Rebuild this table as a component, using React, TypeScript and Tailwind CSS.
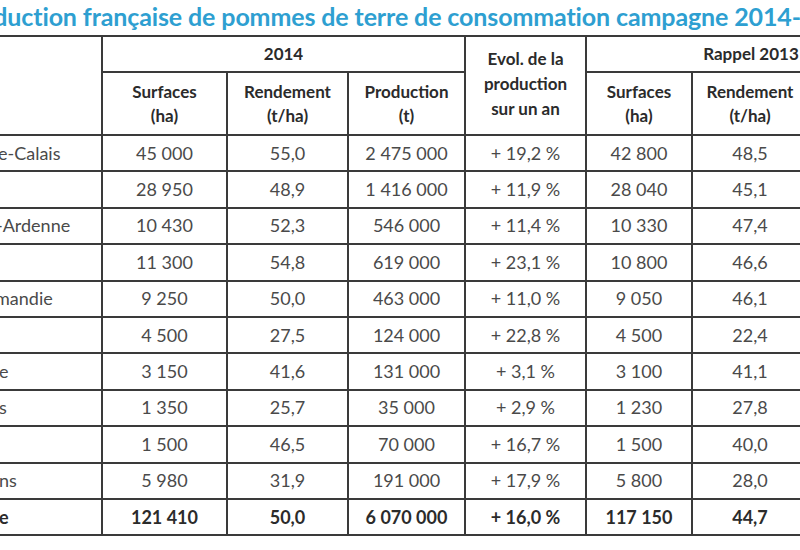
import React from "react";

const rows: { label: string; cells: string[]; bold?: boolean; pad?: string }[] = [
  { label: "e-Calais", cells: ["45 000", "55,0", "2 475 000", "+ 19,2 %", "42 800", "48,5"], pad: "-ml-[2px]" },
  { label: "", cells: ["28 950", "48,9", "1 416 000", "+ 11,9 %", "28 040", "45,1"] },
  { label: "-Ardenne", cells: ["10 430", "52,3", "546 000", "+ 11,4 %", "10 330", "47,4"], pad: "-ml-[4px]" },
  { label: "", cells: ["11 300", "54,8", "619 000", "+ 23,1 %", "10 800", "46,6"] },
  { label: "mandie", cells: ["9 250", "50,0", "463 000", "+ 11,0 %", "9 050", "46,1"], pad: "-ml-[5px]" },
  { label: "", cells: ["4 500", "27,5", "124 000", "+ 22,8 %", "4 500", "22,4"] },
  { label: "e", cells: ["3 150", "41,6", "131 000", "+ 3,1 %", "3 100", "41,1"], pad: "-ml-[1px]" },
  { label: "s", cells: ["1 350", "25,7", "35 000", "+ 2,9 %", "1 230", "27,8"], pad: "-ml-[1px]" },
  { label: "", cells: ["1 500", "46,5", "70 000", "+ 16,7 %", "1 500", "40,0"] },
  { label: "ns", cells: ["5 980", "31,9", "191 000", "+ 17,9 %", "5 800", "28,0"], pad: "-ml-[1px]" },
  { label: "e", cells: ["121 410", "50,0", "6 070 000", "+ 16,0 %", "117 150", "44,7"], bold: true, pad: "-ml-[1px]" },
];

const font = { fontFamily: "Lato, 'Open Sans', sans-serif" };

export default function App() {
  return (
    <div className="w-[800px] h-[550px] overflow-hidden bg-white" style={font}>
      <div className="h-[35px] overflow-hidden whitespace-nowrap">
        <div className="-ml-[45px] text-[25px] leading-[32px] font-bold text-[#2e9fd1] tracking-[-0.12px]">
          Production française de pommes de terre de consommation campagne 2014-2015
        </div>
      </div>
      <div className="grid w-max grid-cols-[101px_123px_119px_115px_119px_104px_114px_106px] grid-rows-[34px_61px_repeat(11,34.4px)] gap-[2px] bg-[#3a3a3a] py-[2px] text-[#2b2b2b]">
        <div className="row-span-2 bg-white" />
        <div className="col-span-3 flex items-center justify-center bg-white text-[17px] font-bold">2014</div>
        <div className="row-span-2 flex items-center justify-center bg-white pb-[4px] text-center text-[17px] font-bold leading-[25px]">
          Evol. de la<br />production<br />sur un an
        </div>
        <div className="col-span-3 flex items-center justify-center bg-white text-[17px] font-bold">Rappel 2013</div>

        <div className="flex items-center justify-center bg-white text-center text-[17px] font-bold leading-[24px]">Surfaces<br />(ha)</div>
        <div className="flex items-center justify-center bg-white text-center text-[17px] font-bold leading-[24px]">Rendement<br />(t/ha)</div>
        <div className="flex items-center justify-center bg-white text-center text-[17px] font-bold leading-[24px]">Production<br />(t)</div>
        <div className="flex items-center justify-center bg-white text-center text-[17px] font-bold leading-[24px]">Surfaces<br />(ha)</div>
        <div className="flex items-center justify-center bg-white text-center text-[17px] font-bold leading-[24px]">Rendement<br />(t/ha)</div>
        <div className="flex items-center justify-center bg-white text-center text-[17px] font-bold leading-[24px]">Production<br />(t)</div>

        {rows.map((r, i) => (
          <React.Fragment key={i}>
            <div className={`flex items-center overflow-hidden whitespace-nowrap bg-white text-[18px] ${r.bold ? "font-bold text-[#2b2b2b]" : "text-[#4a4a4a]"}`}>
              <span className={r.pad ?? ""}>{r.label}</span>
            </div>
            {r.cells.map((c, j) => (
              <div
                key={j}
                className={`flex items-center justify-center whitespace-nowrap bg-white text-[18px] ${r.bold ? "font-bold text-[#2b2b2b]" : "text-[#4a4a4a]"}`}
              >
                {c}
              </div>
            ))}
            <div className="bg-white" />
          </React.Fragment>
        ))}
      </div>
    </div>
  );
}
